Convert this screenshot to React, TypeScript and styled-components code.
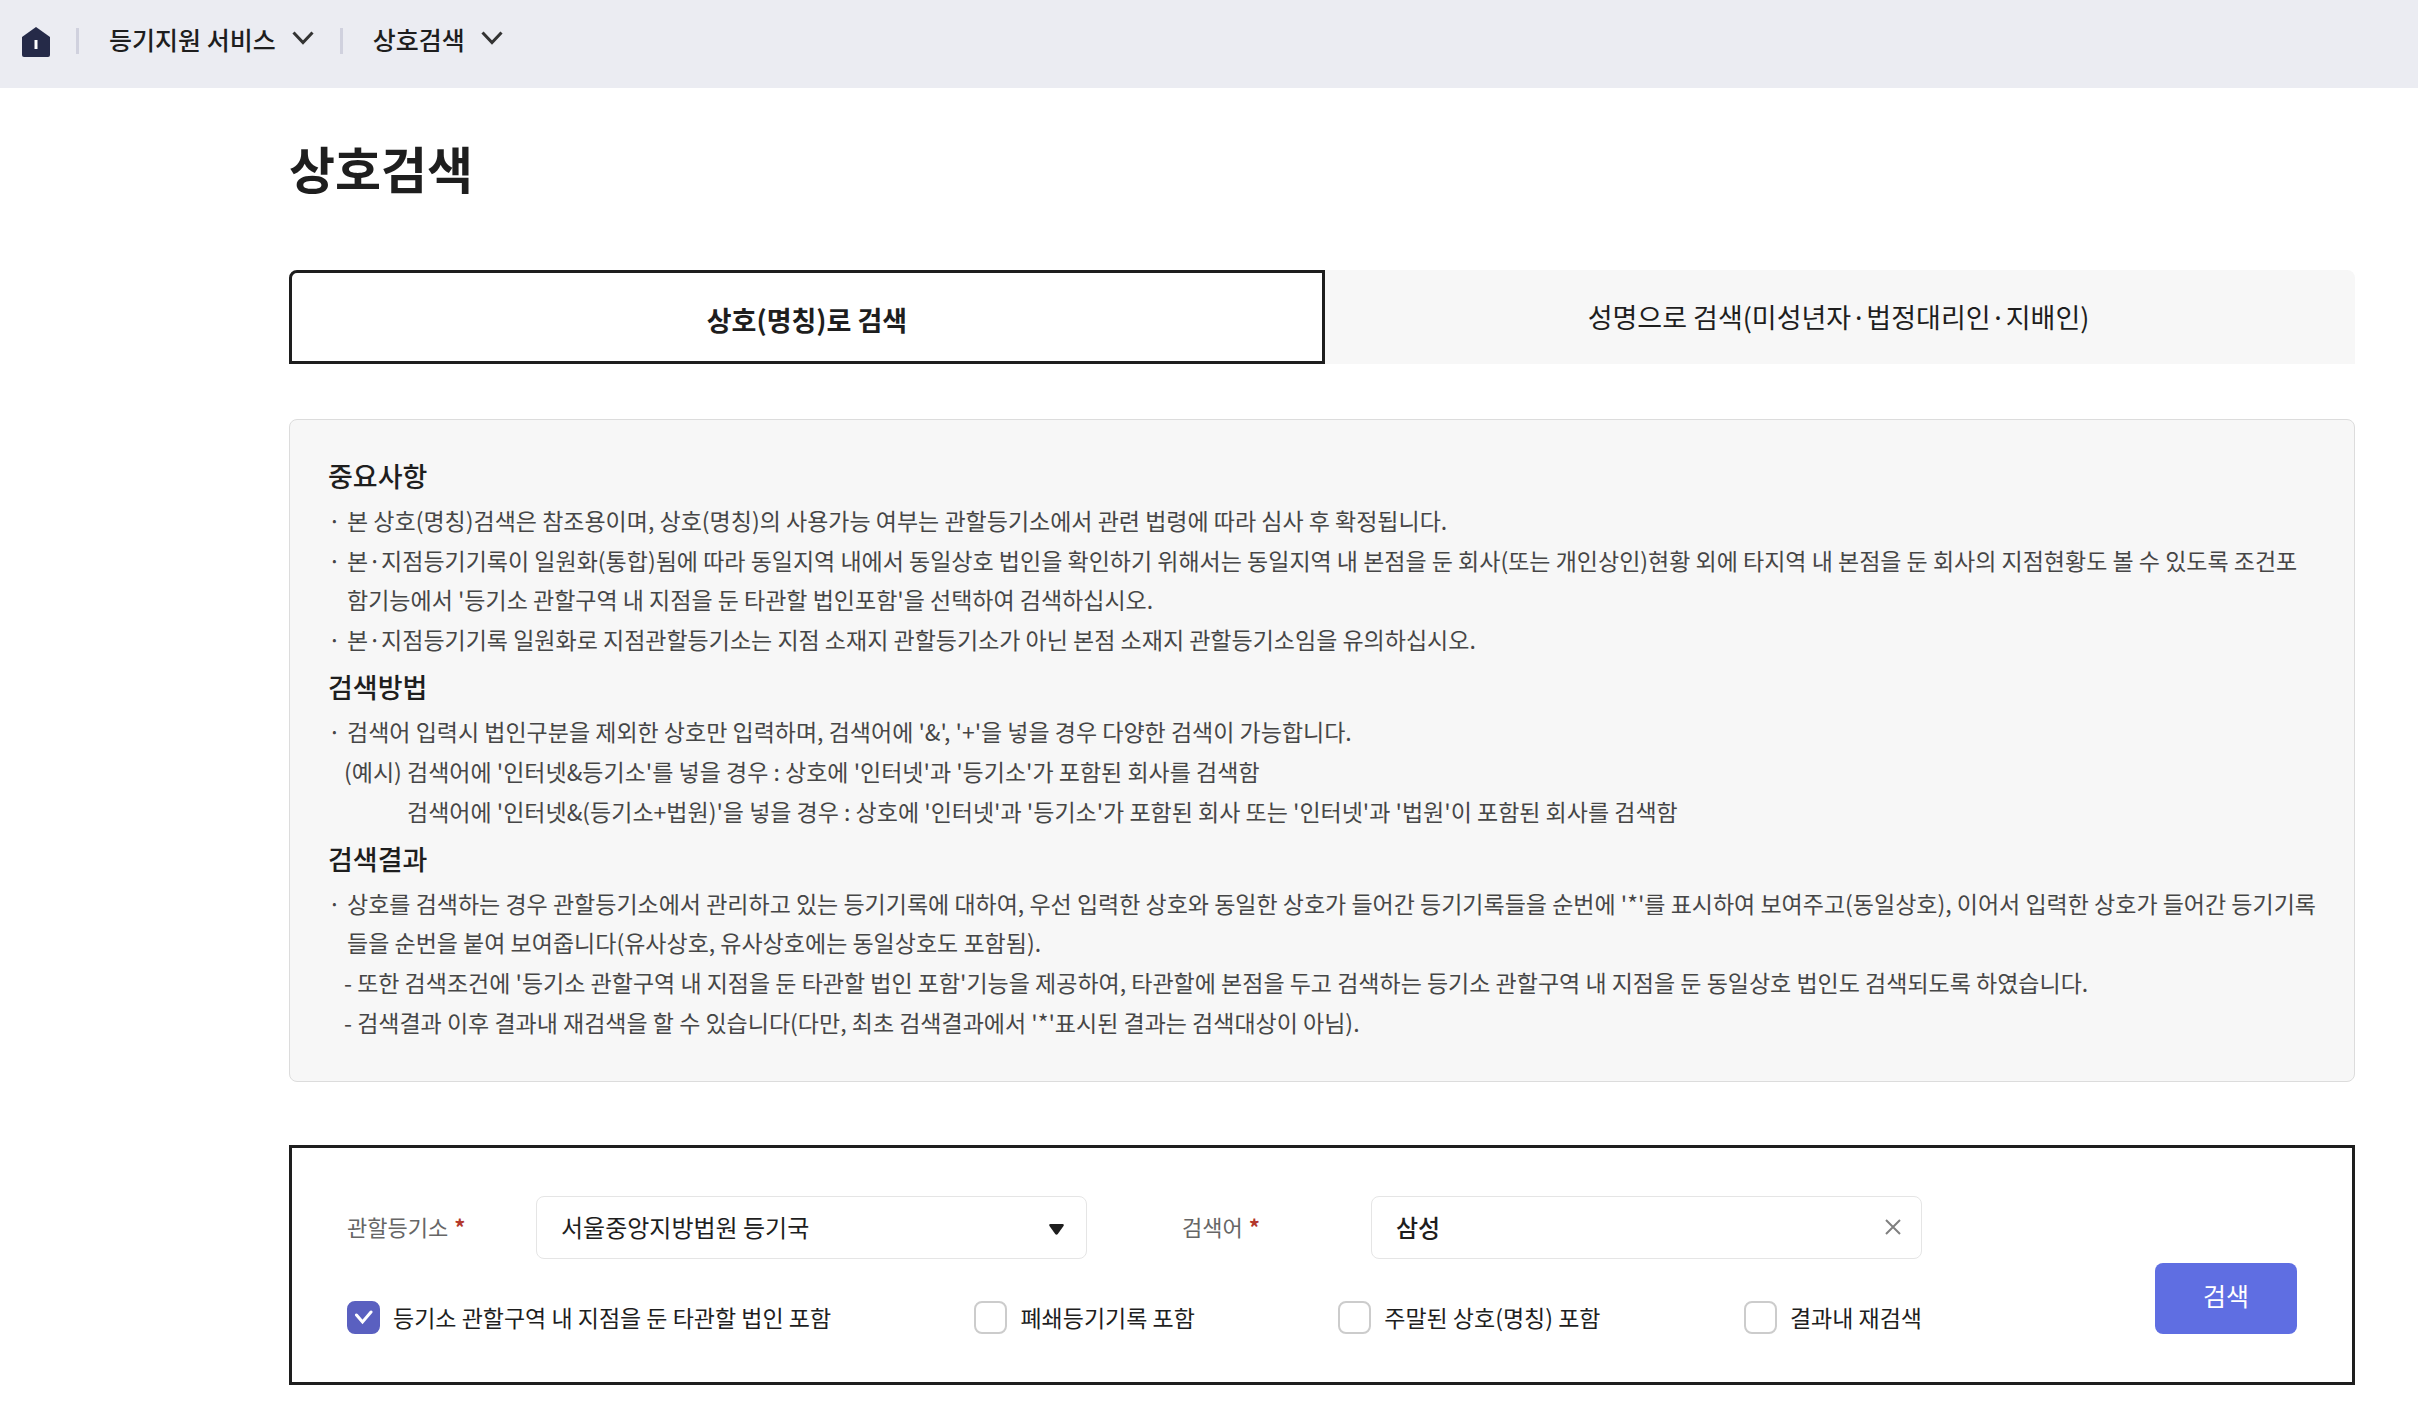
import React, { useState } from "react";
import styled, { createGlobalStyle } from "styled-components";

const ink = "#1e1e1e";

const GlobalStyle = createGlobalStyle`
  *, *::before, *::after { box-sizing: border-box; }
  body {
    margin: 0;
    background: #fff;
    color: ${ink};
    font-family: "Noto Sans CJK KR", "Noto Sans", sans-serif;
    font-size: 23px;
    line-height: 39px;
  }
  button, input, select { font: inherit; color: inherit; }
  h1, h2, p, ul { margin: 0; padding: 0; }
`;

const Breadcrumb = styled.nav`
  display: flex;
  align-items: flex-start;
  height: 88px;
  padding: 21px 22px;
  background: #ebecf2;
`;

const HomeLink = styled.a`
  display: block;
  width: 28px;
  height: 36px;
  padding-top: 6px;

  svg { display: block; }
`;

const Divider = styled.span`
  width: 3px;
  height: 26px;
  margin: 7px 30px 0 26px;
  background: #d0d1de;
`;

const CrumbButton = styled.button`
  display: flex;
  align-items: center;
  gap: 16px;
  padding: 0;
  border: 0;
  background: none;
  font-size: 25px;
  font-weight: 500;
  line-height: 36px;
  cursor: pointer;

  svg { display: block; margin-bottom: 2px; }
`;

const Main = styled.main`
  padding: 43px 63px 22px 289px;
`;

const Title = styled.h1`
  font-size: 50px;
  font-weight: 700;
  line-height: 72px;
`;

const TabList = styled.div`
  display: grid;
  grid-template-columns: 1fr 1fr;
  height: 94px;
  margin-top: 67px;
`;

const Tab = styled.button<{ $active: boolean }>`
  position: relative;
  z-index: ${(p) => (p.$active ? 1 : 0)};
  margin-right: ${(p) => (p.$active ? "-3px" : "0")};
  padding: ${(p) => (p.$active ? "4px 0 0" : "0 0 2px")};
  border: ${(p) => (p.$active ? `3px solid ${ink}` : "0")};
  border-radius: ${(p) => (p.$active ? "8px 0 0 0" : "0 8px 0 0")};
  background: ${(p) => (p.$active ? "#fff" : "#f7f7f7")};
  font-size: 27px;
  font-weight: ${(p) => (p.$active ? 700 : 400)};
  cursor: pointer;
`;

const Notice = styled.section`
  margin-top: 55px;
  padding: 34px 38px 39px;
  border: 1px solid #dcdcdc;
  border-radius: 8px;
  background: #f7f7f7;
`;

const NoticeHeading = styled.h2`
  margin-bottom: 3px;
  font-size: 27px;
  font-weight: 500;
  line-height: 44px;

  ul + & { margin-top: 6px; }
`;

const NoticeList = styled.ul`
  display: flex;
  flex-direction: column;
  gap: 1px;
  list-style: none;
  color: #464646;
`;

const NoticeItem = styled.li`
  display: grid;
  grid-template-columns: 19px 1fr;

  &::before { content: "·"; }
`;

const NoticeNote = styled.li<{ $indent?: boolean }>`
  padding-left: ${(p) => (p.$indent ? 79 : 16)}px;
`;

const SearchForm = styled.form`
  display: flex;
  align-items: flex-end;
  margin-top: 63px;
  padding: 48px 55px;
  border: 3px solid ${ink};
`;

const Conditions = styled.div`
  flex: 1;
  margin-right: 233px;
`;

const FieldRow = styled.div`
  display: grid;
  grid-template-columns: 1fr 1fr;
  column-gap: 95px;
`;

const Field = styled.div`
  display: grid;
  grid-template-columns: 189px 1fr;
  align-items: center;
`;

const FieldLabel = styled.label`
  padding-bottom: 2px;
  color: #666;
  font-size: 22px;
`;

const Required = styled.span`
  margin-left: 6px;
  color: #b3382c;
  font-weight: 700;
`;

const Control = styled.div`
  position: relative;
`;

const controlBox = `
  display: block;
  width: 100%;
  height: 63px;
  padding: 0 56px 2px 24px;
  border: 1px solid #e5e5e5;
  border-radius: 8px;
  background: #fff;
  font-size: 24px;
`;

const Select = styled.select`
  ${controlBox}
  appearance: none;
`;

const TextInput = styled.input`
  ${controlBox}
  font-weight: 500;
`;

const Arrow = styled.svg`
  position: absolute;
  right: 23px;
  top: 28px;
  pointer-events: none;
`;

const ClearButton = styled.button`
  position: absolute;
  right: 13px;
  top: 15px;
  display: grid;
  place-items: center;
  width: 32px;
  height: 32px;
  padding: 0;
  border: 0;
  background: none;
  cursor: pointer;
`;

const CheckRow = styled.div`
  display: flex;
  justify-content: space-between;
  margin-top: 42px;
`;

const CheckLabel = styled.label`
  display: flex;
  align-items: center;
  gap: 13px;
  height: 33px;
`;

const CheckMark = styled.span`
  display: grid;
  width: 33px;
  height: 33px;

  > * { grid-area: 1 / 1; }
  svg { pointer-events: none; place-self: center; }
`;

const CheckBox = styled.input`
  appearance: none;
  width: 33px;
  height: 33px;
  margin: 0;
  border: 2px solid #ccc;
  border-radius: 8px;
  background: #fff;

  &:checked { border-color: #5a60c0; background: #5a60c0; }
`;

const SubmitButton = styled.button`
  width: 142px;
  height: 71px;
  padding: 0 0 6px;
  border: 0;
  border-radius: 8px;
  background: #5f6ee2;
  color: #fff;
  font-size: 25px;
  cursor: pointer;
`;

const Chevron = () => (
  <svg width="22" height="14" viewBox="0 0 22 14" fill="none" stroke="#333" strokeWidth="3" aria-hidden="true">
    <path d="M1.5 1.5 11 11.5 20.5 1.5" />
  </svg>
);

type Line = { kind: "item" | "note" | "deep"; text: string };

const sections: { heading: string; lines: Line[] }[] = [
  {
    heading: "중요사항",
    lines: [
      { kind: "item", text: "본 상호(명칭)검색은 참조용이며, 상호(명칭)의 사용가능 여부는 관할등기소에서 관련 법령에 따라 심사 후 확정됩니다." },
      { kind: "item", text: "본·지점등기기록이 일원화(통합)됨에 따라 동일지역 내에서 동일상호 법인을 확인하기 위해서는 동일지역 내 본점을 둔 회사(또는 개인상인)현황 외에 타지역 내 본점을 둔 회사의 지점현황도 볼 수 있도록 조건포함기능에서 '등기소 관할구역 내 지점을 둔 타관할 법인포함'을 선택하여 검색하십시오." },
      { kind: "item", text: "본·지점등기기록 일원화로 지점관할등기소는 지점 소재지 관할등기소가 아닌 본점 소재지 관할등기소임을 유의하십시오." },
    ],
  },
  {
    heading: "검색방법",
    lines: [
      { kind: "item", text: "검색어 입력시 법인구분을 제외한 상호만 입력하며, 검색어에 '&', '+'을 넣을 경우 다양한 검색이 가능합니다." },
      { kind: "note", text: "(예시) 검색어에 '인터넷&등기소'를 넣을 경우 : 상호에 '인터넷'과 '등기소'가 포함된 회사를 검색함" },
      { kind: "deep", text: "검색어에 '인터넷&(등기소+법원)'을 넣을 경우 : 상호에 '인터넷'과 '등기소'가 포함된 회사 또는 '인터넷'과 '법원'이 포함된 회사를 검색함" },
    ],
  },
  {
    heading: "검색결과",
    lines: [
      { kind: "item", text: "상호를 검색하는 경우 관할등기소에서 관리하고 있는 등기기록에 대하여, 우선 입력한 상호와 동일한 상호가 들어간 등기기록들을 순번에 '*'를 표시하여 보여주고(동일상호), 이어서 입력한 상호가 들어간 등기기록들을 순번을 붙여 보여줍니다(유사상호, 유사상호에는 동일상호도 포함됨)." },
      { kind: "note", text: "- 또한 검색조건에 '등기소 관할구역 내 지점을 둔 타관할 법인 포함'기능을 제공하여, 타관할에 본점을 두고 검색하는 등기소 관할구역 내 지점을 둔 동일상호 법인도 검색되도록 하였습니다." },
      { kind: "note", text: "- 검색결과 이후 결과내 재검색을 할 수 있습니다(다만, 최초 검색결과에서 '*'표시된 결과는 검색대상이 아님)." },
    ],
  },
];

const options = [
  "등기소 관할구역 내 지점을 둔 타관할 법인 포함",
  "폐쇄등기기록 포함",
  "주말된 상호(명칭) 포함",
  "결과내 재검색",
];

const tabs = ["상호(명칭)로 검색", "성명으로 검색(미성년자·법정대리인·지배인)"];

export default function App() {
  const [keyword, setKeyword] = useState("삼성");
  const [checked, setChecked] = useState([true, false, false, false]);

  return (
    <>
      <GlobalStyle />
      <Breadcrumb aria-label="현재 위치">
        <HomeLink href="#" aria-label="홈">
          <svg width="28" height="30" viewBox="0 0 28 30" aria-hidden="true">
            <path fill="#252a48" d="M14 0 28 10V28q0 2-2 2H2q-2 0-2-2V10Z" />
            <path fill="#fff" d="M12.500 13h3v9h-3Z" />
          </svg>
        </HomeLink>
        <Divider />
        <CrumbButton type="button">등기지원 서비스<Chevron /></CrumbButton>
        <Divider />
        <CrumbButton type="button">상호검색<Chevron /></CrumbButton>
      </Breadcrumb>

      <Main>
        <Title>상호검색</Title>

        <TabList role="tablist">
          {tabs.map((name, i) => (
            <Tab key={name} type="button" role="tab" aria-selected={i === 0} $active={i === 0}>
              {name}
            </Tab>
          ))}
        </TabList>

        <Notice>
          {sections.map((section) => (
            <React.Fragment key={section.heading}>
              <NoticeHeading>{section.heading}</NoticeHeading>
              <NoticeList>
                {section.lines.map((line) =>
                  line.kind === "item" ? (
                    <NoticeItem key={line.text}>{line.text}</NoticeItem>
                  ) : (
                    <NoticeNote key={line.text} $indent={line.kind === "deep"}>{line.text}</NoticeNote>
                  )
                )}
              </NoticeList>
            </React.Fragment>
          ))}
        </Notice>

        <SearchForm onSubmit={(e) => e.preventDefault()}>
          <Conditions>
            <FieldRow>
              <Field>
                <FieldLabel htmlFor="office">관할등기소<Required>*</Required></FieldLabel>
                <Control>
                  <Select id="office" defaultValue="seoul">
                    <option value="seoul">서울중앙지방법원 등기국</option>
                  </Select>
                  <Arrow width="15" height="11" viewBox="0 0 15 11" aria-hidden="true">
                    <path fill={ink} d="M1.500 0h12q2 0 1 2L8.800 10q-1.300 1.500-2.600 0L.5 2Q-.5 0 1.500 0Z" />
                  </Arrow>
                </Control>
              </Field>
              <Field>
                <FieldLabel htmlFor="keyword">검색어<Required>*</Required></FieldLabel>
                <Control>
                  <TextInput id="keyword" type="text" value={keyword} onChange={(e) => setKeyword(e.target.value)} />
                  <ClearButton type="button" aria-label="지우기" onClick={() => setKeyword("")}>
                    <svg width="16" height="16" viewBox="0 0 16 16" stroke="#808080" strokeWidth="2" aria-hidden="true">
                      <path d="M1 1 15 15M15 1 1 15" />
                    </svg>
                  </ClearButton>
                </Control>
              </Field>
            </FieldRow>
            <CheckRow>
              {options.map((label, i) => (
                <CheckLabel key={label}>
                  <CheckMark>
                    <CheckBox
                      type="checkbox"
                      checked={checked[i]}
                      onChange={() => setChecked(checked.map((v, j) => (j === i ? !v : v)))}
                    />
                    {checked[i] && (
                      <svg width="19" height="15" viewBox="0 0 19 15" fill="none" stroke="#fff" strokeWidth="3" strokeLinecap="round" aria-hidden="true">
                        <path d="M2.500 5 8.500 12 17 2" />
                      </svg>
                    )}
                  </CheckMark>
                  {label}
                </CheckLabel>
              ))}
            </CheckRow>
          </Conditions>
          <SubmitButton type="submit">검색</SubmitButton>
        </SearchForm>
      </Main>
    </>
  );
}
